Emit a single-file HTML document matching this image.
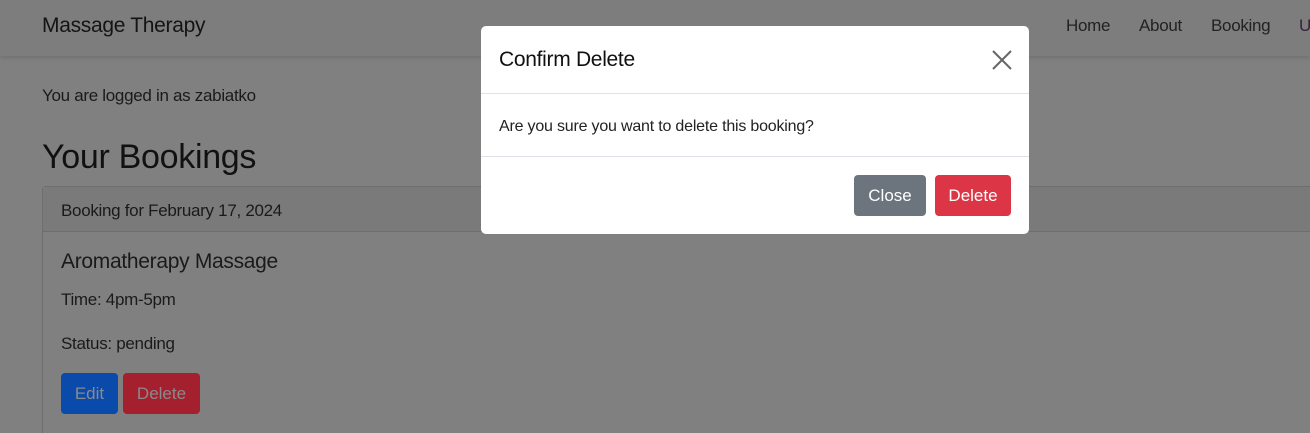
<!DOCTYPE html>
<html><head><meta charset="utf-8"><style>
*{box-sizing:border-box;margin:0;padding:0}
html{width:1310px;height:433px;overflow:hidden}
body{width:1310px;height:433px;overflow:hidden;background:#808080;font-family:"Liberation Sans",sans-serif;color:#111;position:relative}
.nav{position:absolute;left:0;top:0;width:1310px;height:56px;background:#7d7d7d;box-shadow:0 2px 4px rgba(0,0,0,.12)}
.brand{position:absolute;left:42px;top:14px;font-size:21px;color:#141414;letter-spacing:-0.3px}
.links{position:absolute;top:16px;font-size:17px;color:#222;letter-spacing:-0.3px}
.t1{position:absolute;left:42px;top:86px;font-size:17px;color:#1a1a1a;letter-spacing:-0.3px}
.h1{position:absolute;left:42px;top:138px;font-size:34px;color:#111;letter-spacing:-0.3px}
.card{position:absolute;left:42px;top:186px;width:1300px;height:247px;border:1px solid #6e6e6e;border-bottom:none;border-radius:4px 4px 0 0}
.ch{height:45px;background:#7a7a7a;border-bottom:1px solid #6e6e6e;padding:14px 18px;font-size:17px;color:#1a1a1a;letter-spacing:-0.3px}
.ct{position:absolute;left:18px;font-size:17px;color:#1a1a1a;letter-spacing:-0.3px}
.btn{position:absolute;top:186px;height:41px;border-radius:4px;font-size:17px;color:#8a8a8a;padding-top:11px;text-align:center}
.modal{position:absolute;left:481px;top:26px;width:548px;height:208px;background:#fff;border-radius:5px}
.mh{height:68px;border-bottom:1px solid #dee2e6;padding:22px 18px;font-size:21px;color:#111;letter-spacing:-0.3px}
.mb{height:63px;border-bottom:1px solid #dee2e6;padding:24px 18px;font-size:16px;color:#222;letter-spacing:-0.2px}
.mbtn{position:absolute;top:149px;height:41px;border-radius:4px;color:#fff;font-size:17px;text-align:center;padding-top:11px}
</style></head><body>
<div class="nav"><div class="brand">Massage Therapy</div>
<div class="links" style="left:1066px">Home</div>
<div class="links" style="left:1139px">About</div>
<div class="links" style="left:1211px">Booking</div>
<div class="links" style="left:1299px;color:#3a2040">U</div></div>
<div class="t1">You are logged in as zabiatko</div>
<div class="h1">Your Bookings</div>
<div class="card"><div class="ch">Booking for February 17, 2024</div>
<div class="ct" style="top:63px;font-size:21px">Aromatherapy Massage</div>
<div class="ct" style="top:103px">Time: 4pm-5pm</div>
<div class="ct" style="top:147px">Status: pending</div>
<div class="btn" style="left:18px;width:57px;background:#0a4aaa;">Edit</div>
<div class="btn" style="left:80px;width:77px;background:#a4202f;">Delete</div>
</div>
<div class="modal">
<div class="mh">Confirm Delete</div>
<svg style="position:absolute;left:511px;top:24px" width="20" height="20" viewBox="0 0 20 20"><path d="M1 1L19 19M19 1L1 19" stroke="#666" stroke-width="2"/></svg>
<div class="mb">Are you sure you want to delete this booking?</div>
<div class="mbtn" style="left:373px;width:72px;background:#6c757d">Close</div>
<div class="mbtn" style="left:454px;width:76px;background:#dc3545">Delete</div>
</div>
</body></html>
